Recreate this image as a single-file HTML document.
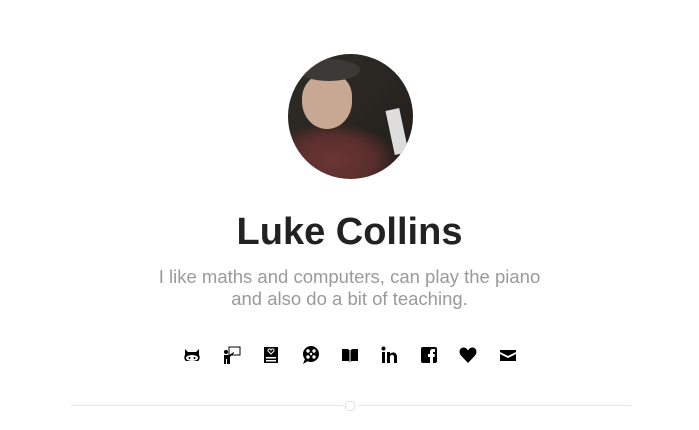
<!DOCTYPE html>
<html><head><meta charset="utf-8"><style>
body{margin:0;width:699px;height:430px;background:#fff;font-family:"Liberation Sans",sans-serif;position:relative;overflow:hidden}
.av{position:absolute;left:288px;top:54px;width:125px;height:125px;border-radius:50%;overflow:hidden;
background:radial-gradient(ellipse 70px 40px at 35% 85%,#6b3634 0%,#5a2e2c 60%,transparent 95%),
linear-gradient(135deg,#2e2a26 0%,#2a2622 50%,#1e1c1a 100%)}
h1{position:absolute;top:211px;left:0;width:699px;text-align:center;margin:0;font-size:38px;font-weight:bold;color:#222}
p{position:absolute;top:266px;left:0;width:699px;text-align:center;margin:0;font-size:18.5px;line-height:22px;color:#9a9a9a}
.ic{position:absolute;top:346px}
.line{position:absolute;top:405px;height:1px;background:#e6e6e6}
</style></head><body>
<div class="av">
<div style="position:absolute;left:14px;top:20px;width:50px;height:55px;background:#c9a893;border-radius:45% 40% 50% 50%"></div>
<div style="position:absolute;left:10px;top:5px;width:62px;height:22px;background:#3c3a36;border-radius:50%"></div>
<div style="position:absolute;left:102px;top:55px;width:14px;height:45px;background:#ddd;transform:rotate(-12deg)"></div>
</div>
<h1>Luke Collins</h1>
<p>I like maths and computers, can play the piano<br>and also do a bit of teaching.</p>
<svg class="ic" style="left:183px" width="18" height="18" viewBox="0 0 18 18"><path d="M2 3l3 3h8l3-3v6c1 1 1 5-1 6H3C1 14 1 10 2 9z" fill="#000"/><ellipse cx="9" cy="12" rx="6" ry="3" fill="#fff"/><circle cx="6.5" cy="12" r="1" fill="#000"/><circle cx="11.5" cy="12" r="1" fill="#000"/></svg>
<svg class="ic" style="left:223px" width="18" height="18" viewBox="0 0 18 18"><rect x="6" y="1" width="11" height="8" fill="none" stroke="#000"/><circle cx="3" cy="6" r="2" fill="#000"/><path d="M1 9h5l5-3v1l-4 4v7H4v-5H3v5H1z" fill="#000"/></svg>
<svg class="ic" style="left:263px" width="16" height="18" viewBox="0 0 16 18"><rect x="1" y="1" width="14" height="16" fill="#000"/><path d="M8 8l-3-3a1.5 1.5 0 0 1 3-1 1.5 1.5 0 0 1 3 1z" fill="none" stroke="#fff"/><rect x="3" y="11" width="10" height="1.5" fill="#fff"/><rect x="3" y="14" width="10" height="1.5" fill="#fff"/></svg>
<svg class="ic" style="left:302px" width="18" height="18" viewBox="0 0 18 18"><circle cx="9" cy="8" r="8" fill="#000"/><path d="M3 13l-2 5 5-3z" fill="#000"/><circle cx="6" cy="5" r="1.7" fill="#fff"/><circle cx="12" cy="5" r="1.7" fill="#fff"/><circle cx="6" cy="11" r="1.7" fill="#fff"/><circle cx="12" cy="11" r="1.7" fill="#fff"/><circle cx="9" cy="8" r="1.2" fill="#fff"/></svg>
<svg class="ic" style="left:341px" width="18" height="18" viewBox="0 0 18 18"><path d="M1 3h6l2 2 2-2h6v12h-6l-2 1-2-1H1z" fill="#000"/><path d="M9 5v11" stroke="#fff"/></svg>
<svg class="ic" style="left:381px" width="18" height="18" viewBox="0 0 18 18"><rect x="1" y="6" width="3" height="11" fill="#000"/><circle cx="2.5" cy="2.5" r="2" fill="#000"/><path d="M6 6h3v2c1-2 7-3 7 3v6h-3v-6c0-3-4-3-4 0v6H6z" fill="#000"/></svg>
<svg class="ic" style="left:420px" width="18" height="18" viewBox="0 0 18 18"><rect x="1" y="1" width="16" height="16" rx="2" fill="#000"/><path d="M10 17v-6H8V8h2V6c0-2 1-3 3-3h2v3h-1.5c-.5 0-.5.3-.5 1v1h2l-.5 3H13v6z" fill="#fff"/></svg>
<svg class="ic" style="left:459px" width="18" height="18" viewBox="0 0 18 18"><path d="M9 17L2 9.5C-1 6 1 1 5 1.5c2 .2 3 1.5 4 3 1-1.5 2-2.8 4-3 4-.5 6 4.5 3 8z" fill="#000"/></svg>
<svg class="ic" style="left:499px" width="18" height="18" viewBox="0 0 18 18"><path d="M1 4h16v2L9 10 1 6z" fill="#000"/><path d="M1 8l8 4 8-4v7H1z" fill="#000"/></svg>
<div class="line" style="left:71px;width:272px"></div>
<div class="line" style="left:358px;width:273px"></div>
<div style="position:absolute;left:345px;top:401px;width:8px;height:8px;border:1px solid #e2e2e2;border-radius:3px"></div>
</body></html>
